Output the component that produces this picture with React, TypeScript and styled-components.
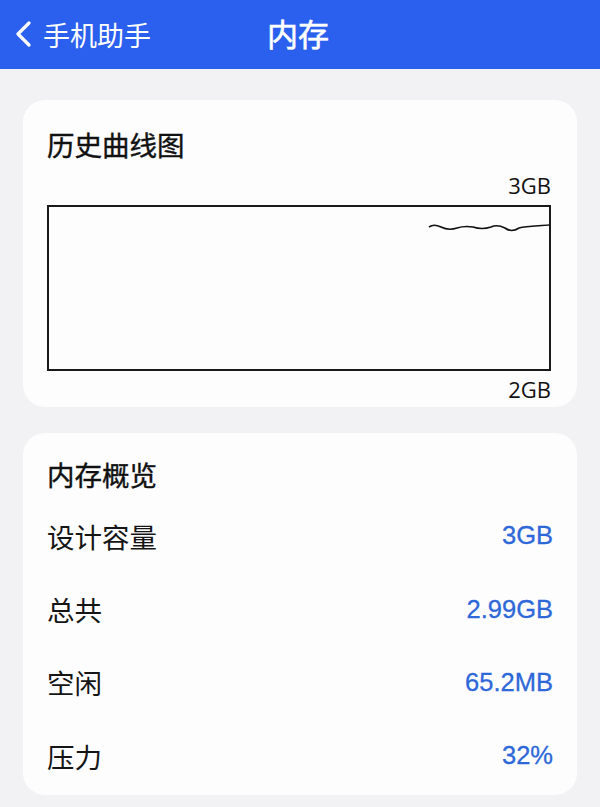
import { FC } from "react";
import styled, { createGlobalStyle } from "styled-components";

const GlobalStyle = createGlobalStyle`
  html, body {
    margin: 0;
    padding: 0;
    background: #f2f2f5;
    font-family: "Noto Sans CJK SC", "Noto Sans", sans-serif;
  }
`;

const rows = [
  { label: "设计容量", value: "3GB" },
  { label: "总共", value: "2.99GB" },
  { label: "空闲", value: "65.2MB" },
  { label: "压力", value: "32%" },
];

const App: FC = () => {
  return (
    <Page>
      <GlobalStyle />
      <Header>
        <BackButton>
          <svg width="20" height="26" viewBox="0 0 20 26">
            <path d="M16 2 L5 13 L16 24" fill="none" stroke="#fff" strokeWidth="3.2" strokeLinecap="round" strokeLinejoin="round" />
          </svg>
          <span>手机助手</span>
        </BackButton>
        <Title>内存</Title>
      </Header>

      <Content>
        <Card $pad="26px 26px 5px 24px">
          <CardTitle>历史曲线图</CardTitle>
          <AxisLabel $top={10}>3GB</AxisLabel>
          <ChartBox>
            <svg width="100%" height="100%" viewBox="0 0 500 162" preserveAspectRatio="none">
              <path
                d="M380 20 C384 17 388 18 392 20 C398 23 402 23 408 21 C414 19 418 19 424 20 C430 22 436 22 442 20 C446 18 450 18 456 21 C460 24 464 25 470 21 C478 19 490 19 500 18"
                fill="none"
                stroke="#111"
                strokeWidth="1.6"
              />
            </svg>
          </ChartBox>
          <AxisLabel $top={5}>2GB</AxisLabel>
        </Card>

        <Card $pad="23px 24px 2px">
          <CardTitle>内存概览</CardTitle>
          <List>
            {rows.map((r) => (
              <Row key={r.label}>
                <RowLabel>{r.label}</RowLabel>
                <RowValue>{r.value}</RowValue>
              </Row>
            ))}
          </List>
        </Card>
      </Content>
    </Page>
  );
};

export default App;

const Page = styled.div`
  width: 600px;
  min-height: 807px;
  background: #f2f2f5;
`;

const Header = styled.header`
  height: 69px;
  background: #2b60ee;
  display: flex;
  align-items: center;
  position: relative;
  color: #fff;
`;

const BackButton = styled.div`
  display: flex;
  align-items: center;
  gap: 10px;
  padding-left: 13px;
  font-size: 27px;
  line-height: 1;
  padding-bottom: 1px;
`;

const Title = styled.div`
  position: absolute;
  left: 267px;
  top: 14px;
  font-size: 31px;
  font-weight: 400;
  -webkit-text-stroke: 0.6px #fff;
  line-height: 38px;
`;

const Content = styled.main`
  padding: 31px 23px 0;
  display: flex;
  flex-direction: column;
  gap: 26px;
`;

const Card = styled.section<{ $pad?: string }>`
  background: #fdfdfe;
  border-radius: 22px;
  padding: ${(p) => p.$pad ?? "26px"};
  display: flex;
  flex-direction: column;
`;

const CardTitle = styled.h2`
  margin: 0;
  font-size: 27.5px;
  font-weight: 400;
  line-height: 36px;
  color: #111;
  -webkit-text-stroke: 0.4px #111;
`;

const AxisLabel = styled.div<{ $top: number }>`
  text-align: right;
  font-family: "Open Sans", "Noto Sans", sans-serif;
  font-size: 22px;
  line-height: 26px;
  color: #111;
  margin-top: ${(p) => p.$top}px;
`;

const ChartBox = styled.div`
  height: 162px;
  border: 2px solid #1a1a1a;
  margin-top: 7px;
`;

const List = styled.div`
  display: flex;
  flex-direction: column;
  margin-top: 7px;
`;

const Row = styled.div`
  display: flex;
  justify-content: space-between;
  align-items: center;
  height: 73.4px;
`;

const RowLabel = styled.span`
  font-size: 27.5px;
  color: #151515;
`;

const RowValue = styled.span`
  font-family: "Liberation Sans", "Noto Sans", sans-serif;
  font-size: 25.5px;
  color: #2e68d8;
  -webkit-text-stroke: 0.3px #2e68d8;
`;
